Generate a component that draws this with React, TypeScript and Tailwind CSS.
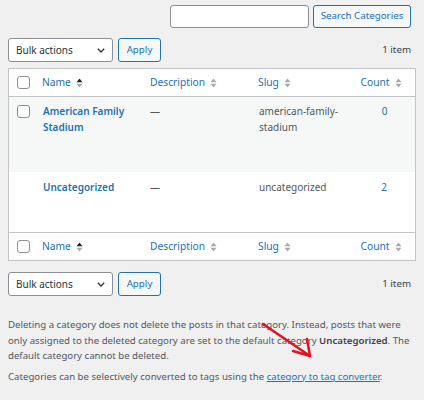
import React from "react";

const font = { fontFamily: '"Noto Sans", "Liberation Sans", sans-serif' };

function SortIcon({ active }: { active?: boolean }) {
  return (
    <svg width="7" height="10" viewBox="0 0 7 10" className="ml-[5px] shrink-0">
      <path d="M3.5 0.5 L6.5 4.3 L0.5 4.3 Z" fill={active ? "#1d2327" : "#a7aaad"} />
      <path d="M3.5 9.5 L6.5 5.7 L0.5 5.7 Z" fill="#a7aaad" />
    </svg>
  );
}

function Checkbox() {
  return <span className="block h-[13px] w-[13px] rounded-[3px] border border-[#8c8f94] bg-white" />;
}

function HeaderRow({ bottom }: { bottom?: boolean }) {
  return (
    <div
      className={`flex h-[28px] items-center text-[10.25px] text-[#2271b1] ${
        bottom ? "border-t border-[#c3c4c7]" : "border-b border-[#c3c4c7]"
      }`}
    >
      <div className="w-[25px] pl-[8px]">
        <Checkbox />
      </div>
      <div className="flex w-[108px] items-center pl-[8px]">
        Name
        <SortIcon active />
      </div>
      <div className="flex w-[108px] items-center pl-[8px]">
        Description
        <SortIcon />
      </div>
      <div className="flex w-[101px] items-center pl-[8px]">
        Slug
        <SortIcon />
      </div>
      <div className="flex flex-1 items-center justify-center pr-[4px]">
        Count
        <SortIcon />
      </div>
    </div>
  );
}

function Toolbar() {
  return (
    <div className="flex h-[24px] items-center px-2">
      <div className="flex h-[24px] w-[105px] items-center justify-between rounded-[3px] border border-[#8c8f94] bg-white pl-[7px] pr-[7px] text-[10px] text-[#2c3338]">
        Bulk actions
        <svg width="8" height="5" viewBox="0 0 8 5">
          <path d="M0.8 0.8 L4 4 L7.2 0.8" stroke="#2c3338" strokeWidth="1.3" fill="none" />
        </svg>
      </div>
      <div className="ml-[5px] flex h-[24px] w-[43px] items-center justify-center rounded-[3px] border border-[#2271b1] bg-[#f6f7f7] text-[9.75px] text-[#2271b1]">
        Apply
      </div>
      <div className="ml-auto pr-[5px] text-[9.75px] text-[#3c434a]">1 item</div>
    </div>
  );
}

export default function App() {
  return (
    <div className="relative h-[400px] w-[424px] overflow-hidden bg-[#f0f0f1]" style={font}>
      <div className="flex justify-end gap-[4px] pr-[13px] pt-[5px]">
        <div className="h-[23px] w-[139px] rounded-[3px] border border-[#8c8f94] bg-white" />
        <div className="flex h-[23px] w-[98px] items-center justify-center rounded-[3px] border border-[#2271b1] bg-[#f6f7f7] text-[9.75px] text-[#2271b1]">
          Search Categories
        </div>
      </div>

      <div className="mt-[10px]">
        <Toolbar />
      </div>

      <div className="mx-2 mt-[6px] border border-[#c3c4c7] bg-white">
        <HeaderRow />
        <div className="flex h-[75px] items-start bg-[#f6f7f7] pt-[6px] text-[10px] leading-[16px]">
          <div className="w-[25px] pl-[8px] pt-[2px]">
            <Checkbox />
          </div>
          <div className="w-[108px] pl-[9px] font-semibold text-[#2271b1]">
            American Family
            <br />
            Stadium
          </div>
          <div className="w-[108px] pl-[8px] text-[#50575e]">—</div>
          <div className="w-[101px] pl-[9px] text-[#50575e]">
            american-family-
            <br />
            stadium
          </div>
          <div className="flex-1 pl-[3px] text-center text-[#2271b1]">0</div>
        </div>
        <div className="flex h-[60px] items-start pt-[7px] text-[10px] leading-[16px]">
          <div className="w-[25px]" />
          <div className="w-[108px] pl-[9px] font-semibold text-[#2271b1]">Uncategorized</div>
          <div className="w-[108px] pl-[8px] text-[#50575e]">—</div>
          <div className="w-[101px] pl-[9px] text-[#50575e]">uncategorized</div>
          <div className="flex-1 pl-[2px] text-center text-[#2271b1]">2</div>
        </div>
        <HeaderRow bottom />
      </div>

      <div className="mt-[11px]">
        <Toolbar />
      </div>

      <div className="mt-[21px] whitespace-nowrap px-2 text-[9.65px] leading-[15.5px] text-[#50575e]">
        <p>
          Deleting a category does not delete the posts in that category. Instead, posts that were
          <br />
          only assigned to the deleted category are set to the default category{" "}
          <strong className="font-semibold text-[#3c434a]">Uncategorized</strong>. The
          <br />
          default category cannot be deleted.
        </p>
        <p className="mt-[5px]">
          Categories can be selectively converted to tags using the{" "}
          <span className="text-[#2271b1] underline">category to tag converter</span>.
        </p>
      </div>

      <svg
        className="pointer-events-none absolute left-0 top-0"
        width="424"
        height="400"
        viewBox="0 0 424 400"
      >
        <path
          d="M263 324 L310 356 M310 356 L307 339 M310 356 L293 351"
          stroke="#e3121f"
          strokeWidth="2.5"
          strokeLinecap="round"
          strokeLinejoin="round"
          fill="none"
        />
      </svg>
    </div>
  );
}
